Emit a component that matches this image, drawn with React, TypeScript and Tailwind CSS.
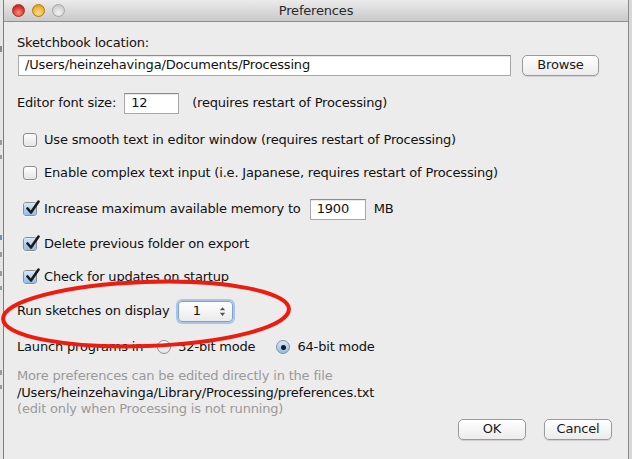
// Processing "Preferences" dialog, Mac OS X Lion look.
import React from 'react'

const font = { fontFamily: '"DejaVu Sans", "Lucida Grande", sans-serif', letterSpacing: '-0.18px' }

function Check({ on }: { on?: boolean }) {
  return (
    <span className="relative inline-flex h-[14px] w-[14px] shrink-0 rounded-[3px] border border-[#8e8e8e] bg-gradient-to-b from-[#ffffff] to-[#e4e4e4] shadow-[0_1px_0_rgba(255,255,255,0.6)]">
      {on && (
        <>
          <span className="absolute inset-0 rounded-[2px] bg-gradient-to-b from-[#d6e8fb] to-[#8fbbe8]" />
          <svg viewBox="0 0 16 16" className="absolute -top-[3px] left-[1px] h-[16px] w-[16px]">
            <path d="M2.5 8.5 L6 12.5 L13.5 1.5" fill="none" stroke="#1a1a1a" strokeWidth="2.6" strokeLinejoin="round" strokeLinecap="round" />
          </svg>
        </>
      )}
    </span>
  )
}

function Radio({ on }: { on?: boolean }) {
  return (
    <span
      className={
        'inline-flex h-[14px] w-[14px] shrink-0 items-center justify-center rounded-full border border-[#8e8e8e] ' +
        (on ? 'bg-gradient-to-b from-[#d6e8fb] to-[#8fbbe8]' : 'bg-gradient-to-b from-[#ffffff] to-[#e4e4e4]')
      }
    >
      {on && <span className="h-[5px] w-[5px] rounded-full bg-[#1a1a1a]" />}
    </span>
  )
}

function Btn({ label, w }: { label: string; w: string }) {
  return (
    <div
      className={
        w +
        ' flex h-[21px] items-center justify-center rounded-[5px] border border-[#9a9a9a] bg-gradient-to-b from-[#ffffff] to-[#ececec] text-[13px] text-[#1a1a1a] shadow-[0_1px_1px_rgba(0,0,0,0.12)]'
      }
    >
      {label}
    </div>
  )
}

function Field({ value, w }: { value: string; w: string }) {
  return (
    <div
      className={
        w +
        ' flex h-[21px] items-center border border-[#a8a8a8] border-t-[#8c8c8c] bg-white pl-[6px] text-[13px] text-[#111] shadow-[inset_0_1px_1px_rgba(0,0,0,0.1)]'
      }
    >
      {value}
    </div>
  )
}

// every line of the dialog sits in a 22px row so the rhythm is easy to tune
const row = 'flex h-[22px] shrink-0 items-center'

export default function App() {
  return (
    <div className="relative flex h-[459px] w-[632px] overflow-hidden bg-[#d8d8d8]" style={font}>
      {/* window behind, peeking out on the left */}
      <div className="flex w-[4px] shrink-0 flex-col overflow-hidden border-r border-[#7d7d7d] bg-[#e6e6e6] pt-[46px]">
        <span className="h-[6px] w-[2px] bg-[#8a8a8a]" />
        <span className="mt-[88px] h-[5px] w-[2px] bg-[#9a9a9a]" />
        <span className="mt-[10px] h-[4px] w-[2px] bg-[#9a9a9a]" />
        <span className="mt-[76px] h-[5px] w-[2px] bg-[#6c8fc8]" />
        <span className="mt-[12px] h-[5px] w-[2px] bg-[#9a9a9a]" />
        <span className="mt-[14px] h-[5px] w-[2px] bg-[#9a9a9a]" />
        <span className="mt-[10px] h-[4px] w-[2px] bg-[#9a9a9a]" />
        <span className="mt-[80px] h-[5px] w-[2px] bg-[#9a9a9a]" />
        <span className="mt-[10px] h-[4px] w-[2px] bg-[#9a9a9a]" />
      </div>

      {/* dialog */}
      <div className="flex w-[625px] shrink-0 flex-col border-r border-[#8a8a8a] bg-[#ececec]">
        {/* title bar */}
        <div className="relative flex h-[22px] shrink-0 items-center border-b border-[#8e8e8e] bg-gradient-to-b from-[#ebebeb] to-[#c9c9c9]">
          <div className="ml-[8px] flex gap-[7px]">
            <span className="h-[13px] w-[13px] rounded-full border border-[#a2302a] bg-[radial-gradient(circle_at_50%_70%,#ff8d80,#d8322a_60%,#b91f18)]" />
            <span className="h-[13px] w-[13px] rounded-full border border-[#b27a18] bg-[radial-gradient(circle_at_50%_70%,#ffe08a,#efb12d_60%,#cf8a12)]" />
            <span className="h-[13px] w-[13px] rounded-full border border-[#a5a5a5] bg-[radial-gradient(circle_at_50%_70%,#f4f4f4,#d4d4d4_60%,#bcbcbc)]" />
          </div>
          <div className="absolute inset-0 flex items-center justify-center text-[13px] text-[#2a2a2a]">Preferences</div>
        </div>

        {/* body */}
        <div className="flex flex-1 flex-col pl-[13px] pr-[27px] text-[13px] text-[#111]">
          <div className={row + ' mt-[10px]'}>Sketchbook location:</div>
          <div className={row}>
            <Field value="/Users/heinzehavinga/Documents/Processing" w="w-[493px] ml-[1px]" />
            <Btn label="Browse" w="ml-[11px] w-[77px]" />
          </div>

          <div className={row + ' mt-[16px]'}>
            <span>Editor font size:</span>
            <Field value="12" w="ml-[8px] w-[55px]" />
            <span className="ml-[13px]">(requires restart of Processing)</span>
          </div>

          <div className={row + ' mt-[15px] gap-[7px] pl-[6px]'}>
            <Check />
            <span>Use smooth text in editor window (requires restart of Processing)</span>
          </div>
          <div className={row + ' mt-[11px] gap-[7px] pl-[6px]'}>
            <Check />
            <span>Enable complex text input (i.e. Japanese, requires restart of Processing)</span>
          </div>
          <div className={row + ' mt-[14px] gap-[7px] pl-[6px]'}>
            <Check on />
            <span>Increase maximum available memory to</span>
            <Field value="1900" w="ml-[2px] w-[56px]" />
            <span className="ml-[1px]">MB</span>
          </div>
          <div className={row + ' mt-[13px] gap-[7px] pl-[6px]'}>
            <Check on />
            <span>Delete previous folder on export</span>
          </div>
          <div className={row + ' mt-[11px] gap-[7px] pl-[6px]'}>
            <Check on />
            <span>Check for updates on startup</span>
          </div>

          <div className={row + ' mt-[12px]'}>
            <span>Run sketches on display</span>
            <div className="ml-[8px] flex h-[21px] w-[55px] items-center justify-between rounded-[4px] border border-[#7aa3d6] bg-gradient-to-b from-[#ffffff] to-[#eaeaea] pl-[14px] pr-[6px] shadow-[0_0_0_2px_rgba(120,165,225,0.55)]">
              <span>1</span>
              <svg viewBox="0 0 8 12" className="h-[11px] w-[7px]">
                <path d="M1 4.5 L4 1 L7 4.5 Z M1 7.5 L4 11 L7 7.5 Z" fill="#555" />
              </svg>
            </div>
          </div>

          <div className={row + ' mt-[14px]'}>
            <span>Launch programs in</span>
            <span className="ml-[14px] flex"><Radio /></span>
            <span className="ml-[7px]">32-bit mode</span>
            <span className="ml-[21px] flex"><Radio on /></span>
            <span className="ml-[7px]">64-bit mode</span>
          </div>

          <div className="mt-[10px] flex flex-col leading-[16.5px]">
            <span className="text-[#9a9a9a]">More preferences can be edited directly in the file</span>
            <span>/Users/heinzehavinga/Library/Processing/preferences.txt</span>
            <span className="text-[#9a9a9a]">(edit only when Processing is not running)</span>
          </div>

          <div className="mt-[1px] flex justify-end gap-[18px]">
            <Btn label="OK" w="w-[68px]" />
            <Btn label="Cancel" w="w-[68px] -mr-[11px]" />
          </div>
        </div>
      </div>

      {/* red annotation ellipse drawn over the dialog */}
      <svg className="pointer-events-none absolute left-0 top-0" width="632" height="459">
        <ellipse cx="146" cy="314" rx="143" ry="32" transform="rotate(-2 146 314)" fill="none" stroke="#ee1b0f" strokeWidth="4" />
      </svg>
    </div>
  )
}
